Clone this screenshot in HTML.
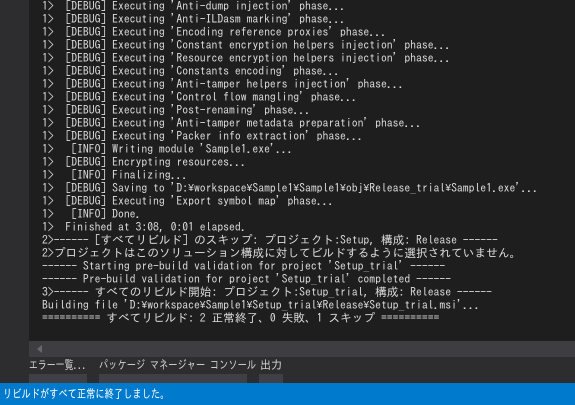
<!DOCTYPE html>
<html><head><meta charset="utf-8"><style>
body{margin:0;width:575px;height:405px;overflow:hidden;background:#2d2d30;position:relative;font-family:"IPAGothic","Liberation Mono",monospace;}
#out{position:absolute;left:29px;top:0;width:546px;height:341px;background:#1e1e1e;}
pre{margin:0;position:absolute;left:13px;top:0;font-family:"IPAGothic","Liberation Mono",monospace;font-size:11.7px;line-height:13px;color:#dcdcdc;white-space:pre;}
pre b{font-weight:normal;display:inline-block;width:5.85px;overflow:hidden;font-family:"Liberation Sans",sans-serif;font-size:10px;text-align:center;vertical-align:top;}
#sb{position:absolute;left:29px;top:341px;width:546px;height:16px;background:#3e3e42;}
#sb i{position:absolute;left:8px;top:4px;border-right:5px solid #686868;border-top:4px solid transparent;border-bottom:4px solid transparent;}
.tab{position:absolute;top:359px;font-size:12px;color:#d0d0d0;font-family:"IPAGothic","Noto Sans CJK JP",sans-serif;transform-origin:0 0;white-space:nowrap;}
.blk{position:absolute;top:374px;height:9px;background:#3f3f46;}
#st{position:absolute;left:0;top:383px;width:575px;height:22px;background:#007acc;}
#st span{position:absolute;left:3px;top:0;color:#fff;font-size:12px;line-height:22px;font-family:"IPAGothic","Noto Sans CJK JP",sans-serif;transform:scaleX(0.77);transform-origin:0 0;white-space:nowrap;}
</style></head><body>
<div id="out"><pre>1>  [DEBUG] Executing 'Anti-dump injection' phase...
1>  [DEBUG] Executing 'Anti-ILDasm marking' phase...
1>  [DEBUG] Executing 'Encoding reference proxies' phase...
1>  [DEBUG] Executing 'Constant encryption helpers injection' phase...
1>  [DEBUG] Executing 'Resource encryption helpers injection' phase...
1>  [DEBUG] Executing 'Constants encoding' phase...
1>  [DEBUG] Executing 'Anti-tamper helpers injection' phase...
1>  [DEBUG] Executing 'Control flow mangling' phase...
1>  [DEBUG] Executing 'Post-renaming' phase...
1>  [DEBUG] Executing 'Anti-tamper metadata preparation' phase...
1>  [DEBUG] Executing 'Packer info extraction' phase...
1>   [INFO] Writing module 'Sample1.exe'...
1>  [DEBUG] Encrypting resources...
1>   [INFO] Finalizing...
1>  [DEBUG] Saving to 'D:<b>¥</b>workspace<b>¥</b>Sample1<b>¥</b>Sample1<b>¥</b>obj<b>¥</b>Release_trial<b>¥</b>Sample1.exe'...
1>  [DEBUG] Executing 'Export symbol map' phase...
1>   [INFO] Done.
1>  Finished at 3:08, 0:01 elapsed.
2>------ [すべてリビルド] のスキップ: プロジェクト:Setup, 構成: Release ------
2>プロジェクトはこのソリューション構成に対してビルドするように選択されていません。
------ Starting pre-build validation for project 'Setup_trial' ------
------ Pre-build validation for project 'Setup_trial' completed ------
3>------ すべてのリビルド開始: プロジェクト:Setup_trial, 構成: Release ------
Building file 'D:<b>¥</b>workspace<b>¥</b>Sample1<b>¥</b>Setup_trial<b>¥</b>Release<b>¥</b>Setup_trial.msi'...
========== すべてリビルド: 2 正常終了、0 失敗、1 スキップ ==========</pre></div>
<div id="sb"><i></i></div>
<div class="tab" style="left:29px;transform:scaleX(0.74)">エラー一覧...</div>
<div class="tab" style="left:99px;transform:scaleX(0.77)">パッケージ マネージャー コンソール</div>
<div class="tab" style="left:260px;transform:scaleX(0.92)">出力</div>
<div class="blk" style="left:29px;width:58px"></div>
<div class="blk" style="left:99px;width:148px"></div>
<div class="blk" style="left:259px;width:24px"></div>
<div id="st"><span>リビルドがすべて正常に終了しました。</span></div>
</body></html>
